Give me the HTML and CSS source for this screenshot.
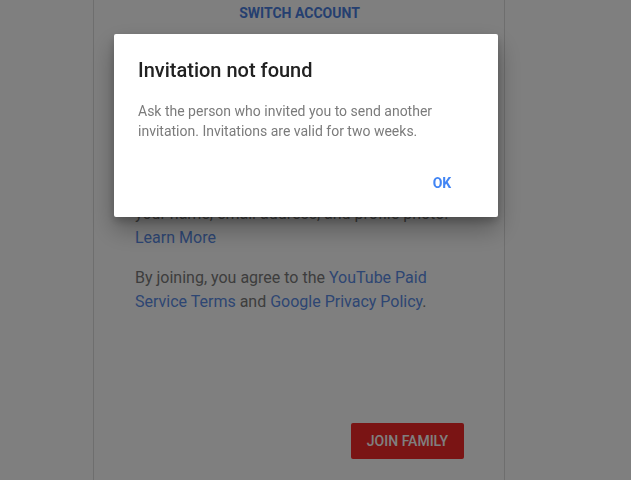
FILE: index.html
```html
<!DOCTYPE html>
<html lang="en">
<head>
  <meta charset="UTF-8">
  <meta name="viewport" content="width=device-width, initial-scale=1.0">
  <title>Join Family - YouTube</title>
  <link rel="stylesheet" href="styles.css">
</head>
<body>
  <div class="join-card">
    <a class="switch-link" href="#">SWITCH ACCOUNT</a>

    <h2 class="join-title">Join this family group</h2>

    <p class="join-text">
      Family members can see<br>
      your name, email address, and profile photo.<br>
      <a href="#">Learn More</a>
    </p>

    <p class="join-text">
      By joining, you agree to the <a href="#">YouTube Paid Service Terms</a> and <a href="#">Google Privacy Policy</a>.
    </p>

    <div class="join-actions">
      <button class="join-btn" type="button">JOIN FAMILY</button>
    </div>
  </div>

  <div class="overlay">
    <div class="dialog">
      <h3 class="dialog-title">Invitation not found</h3>
      <p class="dialog-text">Ask the person who invited you to send another invitation. Invitations are valid for two weeks.</p>
      <div class="dialog-actions">
        <button class="dialog-btn" type="button">OK</button>
      </div>
    </div>
  </div>
</body>
</html>
```

FILE: styles.css
```css
* {
  box-sizing: border-box;
  margin: 0;
  padding: 0;
}

body {
  font-family: Roboto, 'Noto Sans', Arial, sans-serif;
  background-color: #fefefe;
  min-height: 100vh;
  overflow: hidden;
}

a {
  color: #4272d6;
  text-decoration: none;
}

.join-card {
  width: 412px;
  margin-left: 93px;
  margin-top: -20px;
  padding: 24px 40px 0 41px;
  min-height: 540px;
  background: #ffffff;
  border-left: 1px solid #dcdcdc;
  border-right: 1px solid #dcdcdc;
}

.switch-link {
  display: block;
  text-align: center;
  font-size: 14px;
  font-weight: 700;
  line-height: 18px;
  color: #4a7fe0;
}

.join-title {
  font-size: 20px;
  font-weight: 400;
  line-height: 28px;
  color: #212121;
  margin-top: 57px;
  margin-bottom: 71px;
}

.join-text {
  font-size: 16px;
  line-height: 24px;
  color: #7a7a7a;
  margin-bottom: 16px;
}

.join-text a {
  color: #5b8ce6;
}

.join-actions {
  display: flex;
  justify-content: flex-end;
  margin-top: 109px;
}

.join-btn {
  font-family: inherit;
  height: 36px;
  padding: 0 16px;
  background-color: #f52828;
  color: #ffffff;
  border: none;
  border-radius: 2px;
  font-size: 14px;
  font-weight: 500;
}

.overlay {
  position: fixed;
  inset: 0;
  background: rgba(0, 0, 0, 0.5);
}

.dialog {
  position: absolute;
  left: 114px;
  top: 34px;
  width: 384px;
  height: 183px;
  background: #ffffff;
  border-radius: 2px;
  padding: 24px 24px 0;
  box-shadow: 0 12px 24px rgba(0, 0, 0, 0.3), 0 4px 8px rgba(0, 0, 0, 0.2);
}

.dialog-title {
  font-size: 20px;
  font-weight: 500;
  line-height: 24px;
  color: #212121;
}

.dialog-text {
  margin-top: 19px;
  font-size: 14px;
  line-height: 20px;
  color: #7b7b7b;
}

.dialog-actions {
  display: flex;
  justify-content: flex-end;
  margin-top: 24px;
}

.dialog-btn {
  font-family: inherit;
  min-width: 64px;
  height: 36px;
  background: none;
  border: none;
  color: #4285f4;
  font-size: 14px;
  font-weight: 700;
}
```
